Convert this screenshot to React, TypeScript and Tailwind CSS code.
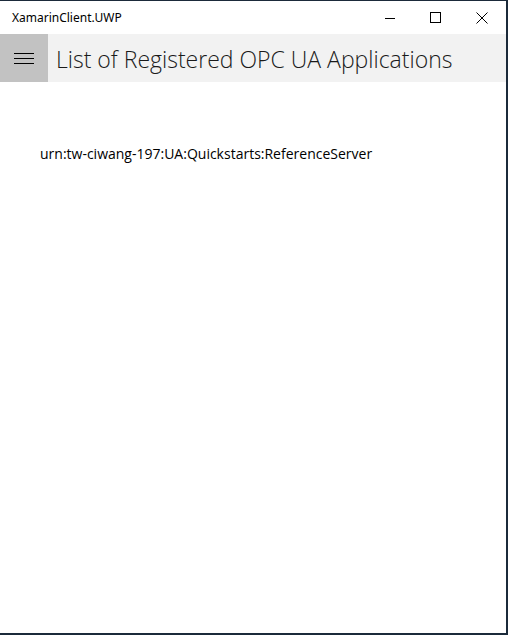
const apps = ['urn:tw-ciwang-197:UA:Quickstarts:ReferenceServer'];

export default function App() {
  return (
    <div className="h-[635px] w-[508px] bg-[#1b2a3a] pt-px pr-[2px] pb-[2px]" style={{ fontFamily: '"Open Sans", "Noto Sans", sans-serif' }}>
      <div className="flex h-full flex-col bg-white">
        {/* title bar */}
        <div className="flex h-[33px] items-center bg-white">
          <span className="pl-[12px] text-[12px] text-black" style={{ fontFamily: '"Noto Sans", sans-serif' }}>XamarinClient.UWP</span>
          <div className="ml-auto flex h-full pr-[1px]">
            <div className="flex w-[46px] items-center justify-center">
              <svg width="12" height="12" viewBox="0 0 12 12"><path d="M1 6.5h10" stroke="#000" strokeWidth="1" /></svg>
            </div>
            <div className="flex w-[46px] items-center justify-center">
              <svg width="12" height="12" viewBox="0 0 12 12"><rect x="0.5" y="0.5" width="10" height="10" fill="none" stroke="#000" strokeWidth="1" /></svg>
            </div>
            <div className="flex w-[46px] items-center justify-center">
              <svg width="12" height="12" viewBox="0 0 12 12"><path d="M0.5 0.5l11 11M11.5 0.5l-11 11" stroke="#000" strokeWidth="1" /></svg>
            </div>
          </div>
        </div>
        {/* header */}
        <div className="flex h-[48px] items-center bg-[#f2f2f2]">
          <button className="flex h-full w-[48px] flex-col items-center justify-center gap-[4px] bg-[#c2c2c2]">
            <span className="block h-px w-[20px] bg-black" />
            <span className="block h-px w-[20px] bg-black" />
            <span className="block h-px w-[20px] bg-black" />
          </button>
          <h1 className="pl-[8px] pt-[3px] text-[23px] font-light text-[#1a1a1a]">List of Registered OPC UA Applications</h1>
        </div>
        {/* list */}
        <div className="px-[40px] pt-[61px]">
          {apps.map((a) => (
            <div key={a} className="text-[14px] text-black">{a}</div>
          ))}
        </div>
      </div>
    </div>
  );
}
